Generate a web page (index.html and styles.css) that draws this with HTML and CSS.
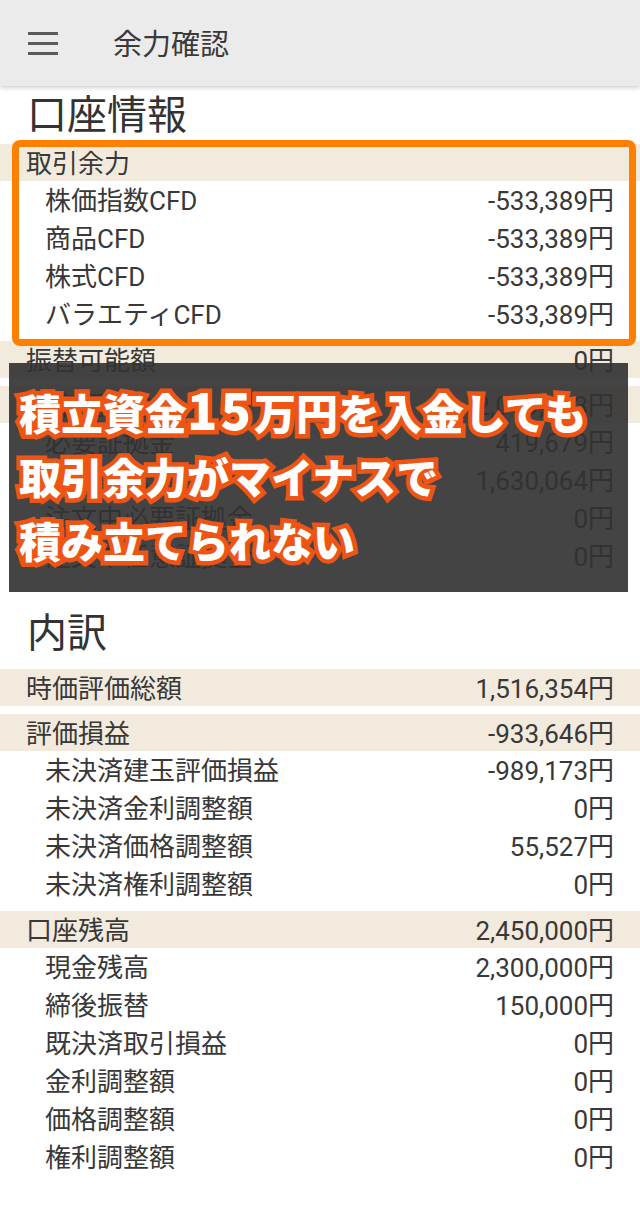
FILE: index.html
```html
<!DOCTYPE html>
<html lang="ja">
<head>
<meta charset="utf-8">
<title>余力確認</title>
<link rel="stylesheet" href="styles.css">
</head>
<body>
<div class="page">
  <header class="appbar">
    <div class="menu-icon"><span></span><span></span><span></span></div>
    <div class="appbar-title">余力確認</div>
  </header>

  <main class="content">
    <section class="section">
      <h2 class="heading">口座情報</h2>
      <div class="group">
        <div class="row head"><span>取引余力</span><span></span></div>
        <div class="row sub"><span>株価指数CFD</span><span>-533,389円</span></div>
        <div class="row sub"><span>商品CFD</span><span>-533,389円</span></div>
        <div class="row sub"><span>株式CFD</span><span>-533,389円</span></div>
        <div class="row sub"><span>バラエティCFD</span><span>-533,389円</span></div>
      </div>
      <div class="group">
        <div class="row head"><span>振替可能額</span><span>0円</span></div>
      </div>
      <div class="group">
        <div class="row head"><span>拘束証拠金</span><span>2,049,743円</span></div>
        <div class="row sub"><span>必要証拠金</span><span>419,679円</span></div>
        <div class="row sub"><span>任意証拠金</span><span>1,630,064円</span></div>
        <div class="row sub"><span>注文中必要証拠金</span><span>0円</span></div>
        <div class="row sub"><span>注文中任意証拠金</span><span>0円</span></div>
      </div>
    </section>

    <section class="section">
      <h2 class="heading">内訳</h2>
      <div class="group">
        <div class="row head"><span>時価評価総額</span><span>1,516,354円</span></div>
      </div>
      <div class="group">
        <div class="row head"><span>評価損益</span><span>-933,646円</span></div>
        <div class="row sub"><span>未決済建玉評価損益</span><span>-989,173円</span></div>
        <div class="row sub"><span>未決済金利調整額</span><span>0円</span></div>
        <div class="row sub"><span>未決済価格調整額</span><span>55,527円</span></div>
        <div class="row sub"><span>未決済権利調整額</span><span>0円</span></div>
      </div>
      <div class="group">
        <div class="row head"><span>口座残高</span><span>2,450,000円</span></div>
        <div class="row sub"><span>現金残高</span><span>2,300,000円</span></div>
        <div class="row sub"><span>締後振替</span><span>150,000円</span></div>
        <div class="row sub"><span>既決済取引損益</span><span>0円</span></div>
        <div class="row sub"><span>金利調整額</span><span>0円</span></div>
        <div class="row sub"><span>価格調整額</span><span>0円</span></div>
        <div class="row sub"><span>権利調整額</span><span>0円</span></div>
      </div>
    </section>
  </main>

  <div class="highlight-box"></div>
  <div class="caption">
    <p class="caption-line">積立資金<span class="caption-num">15</span>万円を入金しても</p>
    <p class="caption-line">取引余力がマイナスで</p>
    <p class="caption-line">積み立てられない</p>
  </div>
</div>
</body>
</html>
```

FILE: styles.css
```css
* { box-sizing: border-box; }

html, body {
  margin: 0;
  padding: 0;
  background: #ffffff;
}

body {
  font-family: Roboto, "Noto Sans CJK JP", sans-serif;
  color: #383838;
}

.page {
  position: relative;
  width: 640px;
  min-height: 1208px;
  overflow: hidden;
}

.appbar {
  height: 86px;
  background: #ebebeb;
  display: flex;
  align-items: center;
  box-shadow: 0 2px 4px rgba(0, 0, 0, 0.18);
  position: relative;
  z-index: 1;
}

.menu-icon {
  width: 30px;
  margin-left: 28px;
  display: flex;
  flex-direction: column;
  gap: 7px;
}

.menu-icon span {
  display: block;
  height: 3px;
  background: #5a5a5a;
}

.appbar-title {
  margin-left: 55px;
  font-size: 29px;
  color: #3a3a3a;
  line-height: 1;
  padding-top: 4px;
}

.content {
  padding-top: 6px;
}

.section + .section {
  margin-top: 35px;
}

.heading {
  margin: 0;
  font-weight: normal;
  font-size: 40px;
  line-height: 40px;
  padding: 4px 0 0 27px;
  color: #333;
}

.section + .section .heading {
  padding-bottom: 7px;
}

.group {
  margin-top: 8px;
}

.row {
  display: flex;
  justify-content: space-between;
  align-items: center;
  font-size: 26px;
  padding-right: 26px;
  padding-bottom: 3px;
  white-space: nowrap;
}

.row.head {
  height: 37px;
  background: #f2eadd;
  padding-left: 26px;
}

.row.sub {
  height: 38px;
  padding-left: 45px;
}

.highlight-box {
  position: absolute;
  left: 12px;
  top: 140px;
  width: 624px;
  height: 206px;
  border: 7px solid #ff8000;
  border-radius: 8px;
}

.caption {
  position: absolute;
  left: 9px;
  top: 363px;
  width: 619px;
  height: 229px;
  background: rgba(50, 50, 50, 0.91);
  padding: 13px 0 0 10px;
}

.caption-line {
  margin: 0;
  font-family: "Noto Sans CJK JP", sans-serif;
  font-weight: 900;
  font-size: 42px;
  line-height: 64px;
  color: #ffffff;
  -webkit-text-stroke: 9px #ee5414;
  paint-order: stroke fill;
  white-space: nowrap;
}

.caption-num {
  font-size: 50px;
  letter-spacing: 3px;
}
```
